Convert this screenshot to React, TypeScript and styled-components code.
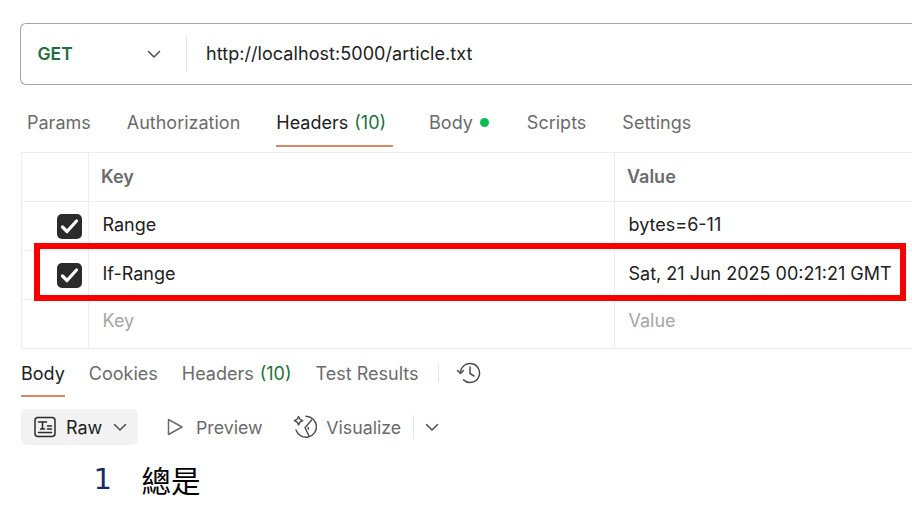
import React, { FC } from 'react';
import styled, { createGlobalStyle } from 'styled-components';

const GlobalStyle = createGlobalStyle`
  html, body {
    margin: 0;
    padding: 0;
    background: #fff;
    overflow: hidden;
  }
  body {
    font-family: Inter, "Noto Sans CJK TC", sans-serif;
    color: #212121;
  }
`;

const Page = styled.div`
  position: relative;
  width: 912px;
  height: 512px;
  overflow: hidden;
  padding-top: 23px;
  box-sizing: border-box;
`;

const UrlBar = styled.div`
  display: flex;
  align-items: center;
  height: 62px;
  margin-left: 20px;
  box-sizing: border-box;
  border: 1px solid #a6a6a6;
  border-right: none;
  border-radius: 6px 0 0 6px;
`;

const MethodBox = styled.div`
  display: flex;
  align-items: center;
  justify-content: space-between;
  width: 166px;
  height: 36px;
  box-sizing: border-box;
  padding: 0 24px 0 16.5px;
  border-right: 1px solid #e6e6e6;
`;

const Method = styled.span`
  font-size: 17.5px;
  font-weight: 600;
  color: #1f6f3d;
  padding-bottom: 2px;
`;

const Url = styled.span`
  margin-left: 19px;
  font-size: 18px;
  letter-spacing: 0.06px;
  color: #212121;
  padding-bottom: 2px;
`;

const TabRow = styled.div<{ gap: number; height: number; left: number }>`
  display: flex;
  gap: ${(props) => props.gap}px;
  height: ${(props) => props.height}px;
  padding-left: ${(props) => props.left}px;
  align-items: stretch;
`;

const Tab = styled.div<{ active?: boolean; trail?: number; drop?: number }>`
  display: flex;
  align-items: center;
  gap: 6px;
  font-size: 18px;
  color: ${(props) => (props.active ? '#212121' : '#6b6b6b')};
  padding-right: ${(props) => props.trail ?? 0}px;
  padding-top: ${(props) => props.drop ?? 0}px;
  box-shadow: ${(props) => (props.active ? 'inset 0 -2px 0 #d9885f' : 'none')};
`;

const Count = styled.span`
  color: #1f6f3d;
`;

const Dot = styled.span`
  width: 9px;
  height: 9px;
  border-radius: 50%;
  background: #0cbb52;
  margin: 0 1.5px;
`;

const Table = styled.div`
  margin: 5px 0 0 21px;
  border-top: 1px solid #ededed;
  border-left: 1px solid #ededed;
`;

const Row = styled.div`
  display: grid;
  grid-template-columns: 67px 526px 1fr;
  height: 49px;
  box-sizing: border-box;
  border-bottom: 1px solid #ededed;
  font-size: 18px;
`;

const Cell = styled.div<{ head?: boolean; ghost?: boolean; indent: number; lift?: number }>`
  display: flex;
  align-items: center;
  justify-content: flex-start;
  padding-left: ${(props) => props.indent}px;
  padding-bottom: ${(props) => props.lift ?? 0}px;
  border-right: 1px solid #ededed;
  font-weight: ${(props) => (props.head ? 600 : 400)};
  color: ${(props) =>
    props.head ? '#6b6b6b' : props.ghost ? '#a6a6a6' : '#212121'};
  white-space: nowrap;

  &:last-child {
    border-right: none;
  }
`;

const CheckCell = styled(Cell)`
  justify-content: flex-end;
  padding-right: 6px;
  padding-left: 0;
`;

const CheckBox = styled.span`
  display: flex;
  align-items: center;
  justify-content: center;
  width: 25px;
  height: 25px;
  border-radius: 5px;
  background: #2b2b2b;
`;

const Highlight = styled.div`
  position: absolute;
  left: 34px;
  top: 243px;
  width: 872px;
  height: 58px;
  box-sizing: border-box;
  border: 6px solid #f80000;
  pointer-events: none;
`;

const Divider = styled.span<{ height: number }>`
  width: 1px;
  height: ${(props) => props.height}px;
  background: #e6e6e6;
`;

const DividerTab = styled(Tab)`
  margin-left: -5px;
`;

const HistoryIcon = styled.span`
  display: flex;
  align-items: center;
  margin-left: -7px;
`;

const Toolbar = styled.div`
  display: flex;
  align-items: center;
  height: 36px;
  margin: 12px 0 0 21px;
`;

const RawButton = styled.div`
  display: flex;
  align-items: center;
  width: 117px;
  height: 36px;
  box-sizing: border-box;
  padding-left: 13px;
  gap: 10px;
  border-radius: 6px;
  background: #f2f2f2;
  font-size: 18px;
  color: #212121;
`;

const ToolItem = styled.div<{ left: number; gap: number }>`
  display: flex;
  align-items: center;
  gap: ${(props) => props.gap}px;
  margin-left: ${(props) => props.left}px;
  font-size: 17.8px;
  color: #6b6b6b;
`;

const CodeLine = styled.div`
  display: flex;
  align-items: center;
  height: 40px;
  margin-top: 14px;
`;

const LineNumber = styled.span`
  width: 112px;
  text-align: right;
  font-family: "DejaVu Sans", sans-serif;
  font-size: 29px;
  color: #1a2a5e;
`;

const CodeText = styled.span`
  margin-left: 29.5px;
  font-family: "Noto Sans CJK TC", sans-serif;
  font-size: 29.5px;
  color: #000;
`;

const Chevron: FC<{ size?: number; color?: string }> = ({
  size = 16,
  color = '#4d4d4d',
}) => (
  <svg width={size} height={size} viewBox="0 0 16 16" fill="none">
    <path
      d="M2.5 5.5 8 11l5.5-5.5"
      stroke={color}
      strokeWidth="1.5"
      strokeLinecap="round"
      strokeLinejoin="round"
    />
  </svg>
);

const Check: FC = () => (
  <svg width="21" height="21" viewBox="0 0 21 21" fill="none">
    <path
      d="M3.5 11 8 15.5 17.5 5"
      stroke="#fff"
      strokeWidth="3.2"
      strokeLinecap="round"
      strokeLinejoin="round"
    />
  </svg>
);

const headerRows = [
  { key: 'Range', value: 'bytes=6-11' },
  { key: 'If-Range', value: 'Sat, 21 Jun 2025 00:21:21 GMT' },
];

export default function App() {
  return (
    <Page>
      <GlobalStyle />
      <UrlBar>
        <MethodBox>
          <Method>GET</Method>
          <Chevron />
        </MethodBox>
        <Url>http://localhost:5000/article.txt</Url>
      </UrlBar>

      <TabRow gap={36} height={62} left={27}>
        <Tab drop={12}>Params</Tab>
        <Tab drop={12}>Authorization</Tab>
        <Tab active drop={12} trail={7}>
          <span>Headers</span>
          <Count>(10)</Count>
        </Tab>
        <Tab drop={12}>
          <span>Body</span>
          <Dot />
        </Tab>
        <Tab drop={12}>Scripts</Tab>
        <Tab drop={12}>Settings</Tab>
      </TabRow>

      <Table>
        <Row>
          <Cell head indent={0} />
          <Cell head indent={12} lift={2}>Key</Cell>
          <Cell head indent={12} lift={2}>Value</Cell>
        </Row>
        {headerRows.map((row) => (
          <Row key={row.key}>
            <CheckCell indent={0}>
              <CheckBox>
                <Check />
              </CheckBox>
            </CheckCell>
            <Cell indent={13.5} lift={4}>{row.key}</Cell>
            <Cell indent={13.5} lift={4}>{row.value}</Cell>
          </Row>
        ))}
        <Row>
          <Cell indent={0} />
          <Cell ghost indent={13.5} lift={8}>Key</Cell>
          <Cell ghost indent={13.5} lift={8}>Value</Cell>
        </Row>
      </Table>

      <TabRow gap={24} height={48} left={21}>
        <Tab active>Body</Tab>
        <Tab>Cookies</Tab>
        <Tab>
          <span>Headers</span>
          <Count>(10)</Count>
        </Tab>
        <Tab>
          <span>Test Results</span>
        </Tab>
        <DividerTab>
          <Divider height={18} />
        </DividerTab>
        <HistoryIcon>
          <svg width="26" height="26" viewBox="0 0 26 26" fill="none" stroke="#4d4d4d" strokeWidth="1.5" strokeLinecap="round" strokeLinejoin="round">
            <path d="M4.5 13a9.5 9.5 0 1 1 3 6.9" />
            <path d="M1.5 10.5 4.5 13.5 7.5 10.5" />
            <path d="M14 7v6.5l4 2.5" />
          </svg>
        </HistoryIcon>
      </TabRow>

      <Toolbar>
        <RawButton>
          <svg width="22" height="22" viewBox="0 0 22 22" fill="none" stroke="#2b2b2b" strokeWidth="1.5" strokeLinecap="round">
            <rect x="1" y="1.5" width="20" height="19" rx="3" />
            <path d="M4.5 6h8M8.5 6v7M6.5 13h4M4.5 16.5h13M13.5 10h4M13.5 13h4" />
          </svg>
          <span>Raw</span>
          <Chevron />
        </RawButton>
        <ToolItem left={28} gap={12}>
          <svg width="18" height="18" viewBox="0 0 18 18" fill="none" stroke="#6b6b6b" strokeWidth="1.5" strokeLinejoin="round">
            <path d="M2.5 1.5v15L16 9z" />
          </svg>
          <span>Preview</span>
        </ToolItem>
        <ToolItem left={31.5} gap={8}>
          <svg width="24" height="24" viewBox="0 0 24 24" fill="none" stroke="#4d4d4d" strokeWidth="1.4" strokeLinecap="round" strokeLinejoin="round">
            <path d="M12 1.2A10.5 10.5 0 1 1 2 15" />
            <path d="M17.7 5 11 12.7 15 20.7" />
            <path d="M14.3 12.4v1.8" />
            <path d="M4.5 1.5 5.9 4.3 8.7 5.7 5.9 7.1 4.5 9.9 3.1 7.1.3 5.7 3.1 4.3z" />
          </svg>
          <span>Visualize</span>
        </ToolItem>
        <ToolItem left={12} gap={10}>
          <Divider height={24} />
          <Chevron />
        </ToolItem>
      </Toolbar>

      <CodeLine>
        <LineNumber>1</LineNumber>
        <CodeText>總是</CodeText>
      </CodeLine>

      <Highlight />
    </Page>
  );
}
